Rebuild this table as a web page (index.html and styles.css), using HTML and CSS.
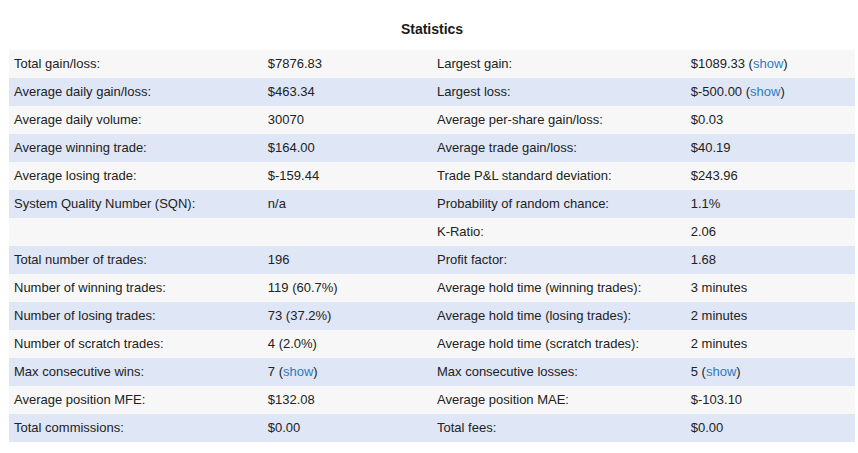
FILE: index.html
```html
<!DOCTYPE html>
<html>
<head>
<meta charset="utf-8">
<link rel="stylesheet" href="styles.css">
</head>
<body>
<div class="page">
  <h2 class="title">Statistics</h2>
  <table class="stats">
    <colgroup>
      <col class="c-label"><col class="c-value"><col class="c-label"><col class="c-value">
    </colgroup>
    <tbody>
      <tr><td>Total gain/loss:</td><td>$7876.83</td><td>Largest gain:</td><td>$1089.33 (<a href="#">show</a>)</td></tr>
      <tr><td>Average daily gain/loss:</td><td>$463.34</td><td>Largest loss:</td><td>$-500.00 (<a href="#">show</a>)</td></tr>
      <tr><td>Average daily volume:</td><td>30070</td><td>Average per-share gain/loss:</td><td>$0.03</td></tr>
      <tr><td>Average winning trade:</td><td>$164.00</td><td>Average trade gain/loss:</td><td>$40.19</td></tr>
      <tr><td>Average losing trade:</td><td>$-159.44</td><td>Trade P&amp;L standard deviation:</td><td>$243.96</td></tr>
      <tr><td>System Quality Number (SQN):</td><td>n/a</td><td>Probability of random chance:</td><td>1.1%</td></tr>
      <tr><td></td><td></td><td>K-Ratio:</td><td>2.06</td></tr>
      <tr><td>Total number of trades:</td><td>196</td><td>Profit factor:</td><td>1.68</td></tr>
      <tr><td>Number of winning trades:</td><td>119 (60.7%)</td><td>Average hold time (winning trades):</td><td>3 minutes</td></tr>
      <tr><td>Number of losing trades:</td><td>73 (37.2%)</td><td>Average hold time (losing trades):</td><td>2 minutes</td></tr>
      <tr><td>Number of scratch trades:</td><td>4 (2.0%)</td><td>Average hold time (scratch trades):</td><td>2 minutes</td></tr>
      <tr><td>Max consecutive wins:</td><td>7 (<a href="#">show</a>)</td><td>Max consecutive losses:</td><td>5 (<a href="#">show</a>)</td></tr>
      <tr><td>Average position MFE:</td><td>$132.08</td><td>Average position MAE:</td><td>$-103.10</td></tr>
      <tr><td>Total commissions:</td><td>$0.00</td><td>Total fees:</td><td>$0.00</td></tr>
    </tbody>
  </table>
</div>
</body>
</html>
```
FILE: styles.css
```css
html, body {
  margin: 0;
  padding: 0;
  background: #ffffff;
}
body {
  font-family: "Liberation Sans", Arial, Helvetica, sans-serif;
  color: #222222;
  font-size: 13px;
}
.page {
  padding: 19px 3px 0 9px;
}
.title {
  margin: 0 0 11px 0;
  width: 846px;
  text-align: center;
  font-size: 14px;
  line-height: 20px;
  font-weight: bold;
  color: #1a1a1a;
}
.stats {
  width: 846px;
  border-collapse: collapse;
  table-layout: fixed;
}
.c-label { width: 30%; }
.c-value { width: 20%; }
.stats td {
  height: 28px;
  padding: 0 5px;
  line-height: 28px;
  white-space: nowrap;
  vertical-align: middle;
}
.stats tr:nth-child(odd) td { background: #f7f7f7; }
.stats tr:nth-child(even) td { background: #dfe6f6; }
.stats a {
  color: #2f7bbf;
  text-decoration: none;
}
```
